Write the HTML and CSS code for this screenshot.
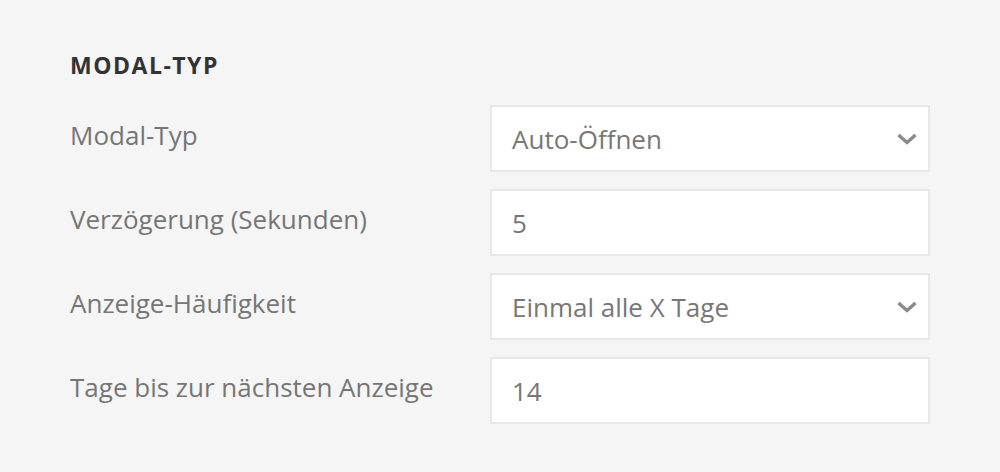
FILE: index.html
```html
<!DOCTYPE html>
<html lang="de">
<head>
<meta charset="utf-8">
<link rel="stylesheet" href="styles.css">
</head>
<body>
<div class="panel">
  <h2 class="title">MODAL-TYP</h2>
  <div class="rows">
    <div class="row">
      <div class="label">Modal-Typ</div>
      <div class="field select"><span>Auto-Öffnen</span>
        <svg class="chev" width="22" height="14" viewBox="0 0 22 14"><path d="M2.5 3 L11 10.5 L19.5 3" fill="none" stroke="#8a8a8a" stroke-width="3.4"/></svg>
      </div>
    </div>
    <div class="row">
      <div class="label">Verzögerung (Sekunden)</div>
      <div class="field"><span>5</span></div>
    </div>
    <div class="row">
      <div class="label">Anzeige-Häufigkeit</div>
      <div class="field select"><span>Einmal alle X Tage</span>
        <svg class="chev" width="22" height="14" viewBox="0 0 22 14"><path d="M2.5 3 L11 10.5 L19.5 3" fill="none" stroke="#8a8a8a" stroke-width="3.4"/></svg>
      </div>
    </div>
    <div class="row">
      <div class="label">Tage bis zur nächsten Anzeige</div>
      <div class="field"><span>14</span></div>
    </div>
  </div>
</div>
</body>
</html>
```
FILE: styles.css
```css
html, body {
  margin: 0;
  padding: 0;
  background: #f5f5f5;
}
.panel {
  width: 1000px;
  height: 472px;
  box-sizing: border-box;
  padding: 50px 70px 0 70px;
  font-family: "Open Sans", "Liberation Sans", sans-serif;
}
.title {
  margin: 0 0 24px 0;
  font-family: "Open Sans", "Liberation Sans", sans-serif;
  font-weight: 700;
  font-size: 23px;
  line-height: 31px;
  letter-spacing: 1.5px;
  color: #333333;
}
.rows {
  display: flex;
  flex-direction: column;
  gap: 17px;
}
.row {
  display: flex;
  align-items: flex-start;
}
.label {
  width: 420px;
  font-size: 26px;
  line-height: 34px;
  color: #767676;
  padding-top: 13px;
}
.field {
  width: 440px;
  height: 67px;
  box-sizing: border-box;
  background: #ffffff;
  border: 2px solid #e8e8e8;
  display: flex;
  align-items: center;
  justify-content: space-between;
  padding: 0 10px 0 20px;
  font-size: 26px;
  color: #777777;
}
.chev {
  display: block;
}
```
